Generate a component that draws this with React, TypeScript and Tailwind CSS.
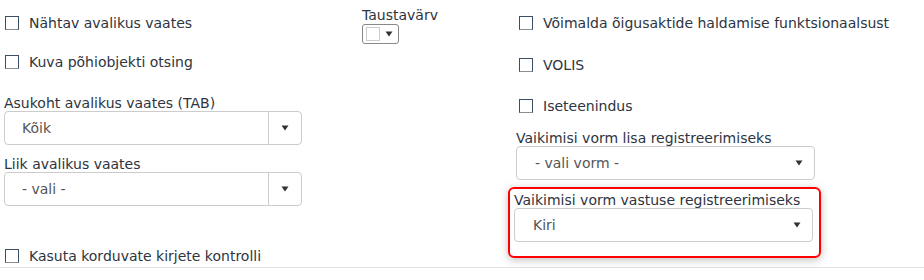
import React from "react";

function Checkbox({ label, className = "" }: { label: string; className?: string }) {
  return (
    <label className={`flex h-[20px] items-center ${className}`}>
      <span className="mr-[10px] box-border h-[14px] w-[14px] shrink-0 border border-[#3c4e63] border-b-[#8a8f96] bg-white" />
      <span>{label}</span>
    </label>
  );
}

function Arrow() {
  return (
    <svg width="8" height="6" viewBox="0 0 8 6" className="shrink-0">
      <path d="M0.5 0.5 H7.5 L4 5.5 Z" fill="#333" />
    </svg>
  );
}

// select with a separated toggle area (left column)
function SplitSelect({ value }: { value: string }) {
  return (
    <div className="flex h-[34px] w-[298px] items-stretch rounded-[4px] border border-[#ccc] bg-white text-[#555]">
      <div className="flex flex-1 items-center pl-[17px]">{value}</div>
      <div className="flex w-[33px] items-center justify-center border-l border-[#ccc]">
        <Arrow />
      </div>
    </div>
  );
}

function PlainSelect({ value }: { value: string }) {
  return (
    <div className="flex h-[34px] w-[299px] items-center justify-between rounded-[4px] border border-[#ccc] bg-white pl-[18px] pr-[11px] text-[#555]">
      <span>{value}</span>
      <Arrow />
    </div>
  );
}

export default function App() {
  return (
    <div className="h-[280px] w-[924px] bg-white font-['DejaVu_Sans',Verdana,sans-serif] text-[14px] leading-[16px] text-[#2e3440]">
      <div className="flex h-[268px] border-b border-[#e2e2e2]">
        {/* Left column */}
        <div className="flex w-[358px] flex-col pl-[4px]">
          <Checkbox label="Nähtav avalikus vaates" className="ml-[1px] mt-[13px]" />
          <Checkbox label="Kuva põhiobjekti otsing" className="ml-[1px] mt-[19px]" />
          <div className="mt-[23px]">Asukoht avalikus vaates (TAB)</div>
          <SplitSelect value="Kõik" />
          <div className="mt-[11px]">Liik avalikus vaates</div>
          <SplitSelect value="- vali -" />
          <Checkbox label="Kasuta korduvate kirjete kontrolli" className="ml-[1px] mt-[40px]" />
        </div>

        {/* Middle column */}
        <div className="flex w-[154px] flex-col pl-[4px] pt-[7px]">
          <div>Taustavärv</div>
          <div className="mt-[1px] flex h-[20px] w-[37px] items-center gap-[5px] rounded-[3px] border border-[#888] bg-white pl-[3px]">
            <span className="h-[14px] w-[14px] border border-[#ccc] bg-white" />
            <Arrow />
          </div>
        </div>

        {/* Right column */}
        <div className="-ml-[8px] flex flex-col">
          <Checkbox label="Võimalda õigusaktide haldamise funktsionaalsust" className="ml-[15px] mt-[13px]" />
          <Checkbox label="VOLIS" className="ml-[15px] mt-[22px]" />
          <Checkbox label="Iseteenindus" className="ml-[15px] mt-[21px]" />
          <div className="ml-[12px] mt-[14px]">Vaikimisi vorm lisa registreerimiseks</div>
          <div className="ml-[12px]">
            <PlainSelect value="- vali vorm -" />
          </div>
          <div className="ml-[4px] mt-[7px] w-[313px] rounded-[6px] border-2 border-[#f00] px-[4px] pb-[14px] pt-[3px] shadow-[0_2px_8px_rgba(0,0,0,0.25)]">
            <div>Vaikimisi vorm vastuse registreerimiseks</div>
            <PlainSelect value="Kiri" />
          </div>
        </div>
      </div>
    </div>
  );
}
